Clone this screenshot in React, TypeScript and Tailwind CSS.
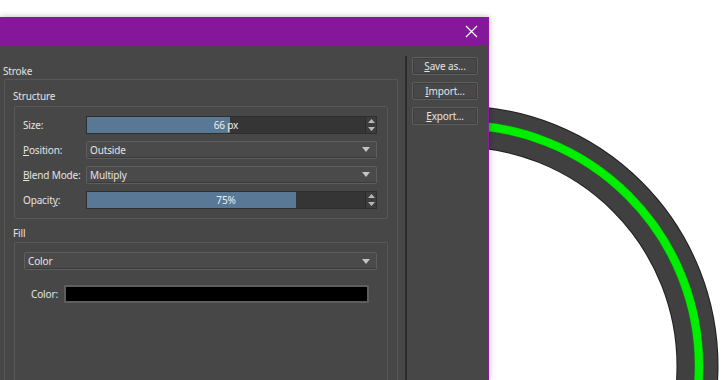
import type { ReactNode } from "react"

function Caret() {
  return (
    <svg width="8" height="5" viewBox="0 0 8 5" className="shrink-0">
      <polygon points="0,0 8,0 4,5" fill="#c4c4c4" />
    </svg>
  )
}

function Spinner() {
  return (
    <div className="flex h-full w-[11px] flex-col items-center justify-center gap-[2px] border-l border-[#2a2a2a] bg-[#3c3c3c]">
      <svg width="7" height="5" viewBox="0 0 7 5">
        <polygon points="0,4 7,4 3.5,0" fill="#b8b8b8" />
      </svg>
      <svg width="7" height="5" viewBox="0 0 7 5">
        <polygon points="0,1 7,1 3.5,5" fill="#b8b8b8" />
      </svg>
    </div>
  )
}

function Slider({ pct, text }: { pct: number; text: string }) {
  return (
    <div className="flex h-[18px] w-full border border-[#2e2e2e] bg-[#353535]">
      <div className="relative flex-1">
        <div className="h-full bg-[#587896]" style={{ width: `${pct}%` }} />
        <span className="absolute inset-0 flex items-center justify-center text-[#eeeeee]">{text}</span>
      </div>
      <Spinner />
    </div>
  )
}

function Select({ value }: { value: string }) {
  return (
    <div className="flex h-[18px] w-full items-center justify-between rounded-[2px] border border-[#5e5e5e] bg-[#4a4a4a] pl-[3px] pr-[6px] shadow-[inset_0_-1px_0_#3a3a3a]">
      <span>{value}</span>
      <Caret />
    </div>
  )
}

function Row({ label, children }: { label: ReactNode; children: ReactNode }) {
  return (
    <div className="flex h-[19px] items-center">
      <div className="w-[63px] shrink-0 whitespace-nowrap">{label}</div>
      <div className="flex-1">{children}</div>
    </div>
  )
}

function Button({ children }: { children: ReactNode }) {
  return (
    <div className="flex h-[18px] w-[66px] items-center justify-center whitespace-nowrap rounded-[2px] border border-[#5e5e5e] bg-[#484848] shadow-[inset_0_0_0_1px_#3e3e3e]">
      {children}
    </div>
  )
}

export default function App() {
  return (
    <div className="relative h-[380px] w-[725px] overflow-hidden bg-white font-['Noto_Sans','Open_Sans',sans-serif] text-[10px] leading-[14px] tracking-[-0.15px] text-[#e4e4e4]">
      {/* stroked ring preview behind the dialog */}
      <svg className="absolute inset-0" width="725" height="380" viewBox="0 0 725 380">
        <circle cx="458" cy="366" r="239.5" fill="none" stroke="#1e1e1e" strokeWidth="42" />
        <circle cx="458" cy="366" r="239.5" fill="none" stroke="#404040" strokeWidth="40" />
        <circle cx="458" cy="366" r="241" fill="none" stroke="#0a9a0a" strokeWidth="9" />
        <circle cx="458" cy="366" r="241" fill="none" stroke="#00ee00" strokeWidth="8" />
      </svg>

      {/* dialog window */}
      <div className="absolute bottom-0 left-0 top-[17px] flex w-[489px] flex-col border-r border-[#8a1c9e] bg-[#474747] shadow-[0_0_6px_rgba(0,0,0,0.3)]">
        <div className="flex h-[28px] shrink-0 items-center justify-end bg-[#85189a] pr-[10px]">
          <svg width="13" height="13" viewBox="0 0 13 13">
            <path d="M1 1L12 12M12 1L1 12" stroke="#ffffff" strokeWidth="1.2" />
          </svg>
        </div>

        <div className="flex min-h-0 flex-1">
          {/* left: settings */}
          <div className="flex w-[405px] shrink-0 flex-col pl-[3px] pr-[7px] pt-[19px]">
            <div>Stroke</div>
            <div className="ml-px mt-px flex flex-1 flex-col rounded-t-[2px] border border-b-0 border-[#585858] pl-[8px] pr-[9px] pt-[9px]">
              <div>Structure</div>
              <div className="ml-px mt-[3px] flex flex-col gap-[6px] rounded-[2px] border border-[#585858] pb-[9px] pl-[8px] pr-[10px] pt-[8px]">
                <Row label="Size:">
                  <Slider pct={51.5} text="66 px" />
                </Row>
                <Row label={<><span className="underline">P</span>osition:</>}>
                  <Select value="Outside" />
                </Row>
                <Row label={<><span className="underline">B</span>lend Mode:</>}>
                  <Select value="Multiply" />
                </Row>
                <Row label={<>Opacit<span className="underline">y</span>:</>}>
                  <Slider pct={75} text="75%" />
                </Row>
              </div>

              <div className="mt-[7px]">Fill</div>
              <div className="ml-px mt-[2px] flex flex-1 flex-col rounded-t-[2px] border border-b-0 border-[#585858] pl-[9px] pr-[10px] pt-[9px]">
                <Select value="Color" />
                <div className="mt-[15px] flex items-center pl-[7px] pr-[8px]">
                  <span className="w-[33px] shrink-0">Color:</span>
                  <div className="h-[18px] flex-1 rounded-[1px] border-2 border-[#5e5e5e] bg-black" />
                </div>
              </div>
            </div>
          </div>

          {/* separator */}
          <div className="mt-[11px] w-[2px] shrink-0 bg-[#2c2c2c]" />

          {/* right: actions */}
          <div className="flex flex-1 flex-col gap-[7px] pl-[5px] pt-[12px]">
            <Button><span className="underline">S</span>ave as...</Button>
            <Button><span className="underline">I</span>mport...</Button>
            <Button><span className="underline">E</span>xport...</Button>
          </div>
        </div>
      </div>
    </div>
  )
}
